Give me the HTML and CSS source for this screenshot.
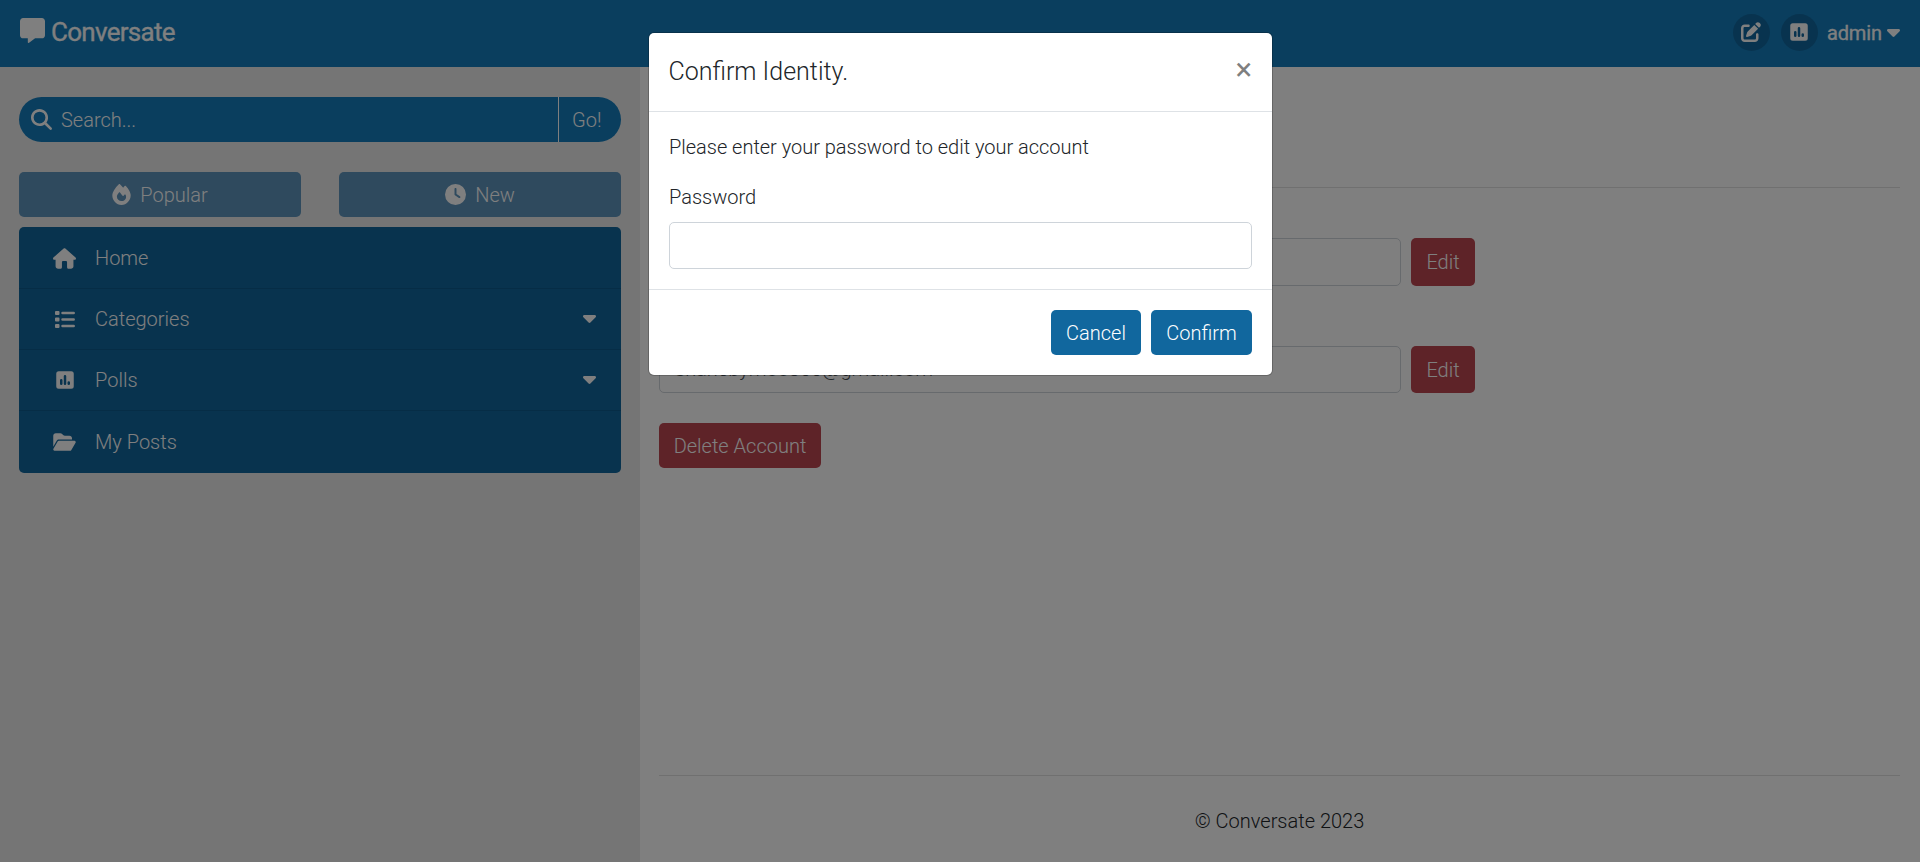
FILE: index.html
```html
<!DOCTYPE html>
<html lang="en">
<head>
<meta charset="utf-8">
<title>Conversate</title>
<link rel="stylesheet" href="styles.css">
</head>
<body>
<svg class="defs" width="0" height="0">
  <symbol id="poll" viewBox="0 0 448 512"><path fill-rule="evenodd" d="M64 32H384a64 64 0 0 1 64 64V416a64 64 0 0 1-64 64H64a64 64 0 0 1-64-64V96a64 64 0 0 1 64-64zM128 228a32 32 0 0 0-32 32v92a32 32 0 0 0 64 0v-92a32 32 0 0 0-32-32zM224 128a32 32 0 0 0-32 32V352a32 32 0 0 0 64 0V160a32 32 0 0 0-32-32zM320 288a32 32 0 0 0-32 32v32a32 32 0 0 0 64 0v-32a32 32 0 0 0-32-32z"/></symbol>
  <symbol id="caret" viewBox="0 0 320 192"><path d="M137.400 182.600c12.500 12.500 32.800 12.500 45.300 0l128-128C330 35 316 0 288 0H32C4 0-10 35 9.400 54.600z"/></symbol>
</svg>
<header class="navbar">
  <a class="brand">
    <svg class="brand-icon" viewBox="0 0 512 512"><path d="M64 0C28.700 0 0 28.700 0 64V352c0 35.300 28.700 64 64 64h96v80c0 6.100 3.400 11.600 8.800 14.300s11.900 2.100 16.800-1.500L309.300 416H448c35.300 0 64-28.700 64-64V64c0-35.300-28.700-64-64-64H64z"/></svg>
    <span>Conversate</span>
  </a>
  <nav class="nav-actions">
    <a class="round"><svg class="edit-icon" viewBox="0 0 512 512"><path d="M471.600 21.700c-21.900-21.900-57.300-21.900-79.200 0L362.300 51.700l97.900 97.900 30.100-30.100c21.900-21.900 21.900-57.300 0-79.200L471.600 21.700zm-299.200 220c-6.100 6.100-10.800 13.600-13.500 21.900l-29.600 88.800c-2.900 8.600-.6 18.100 5.800 24.600s15.900 8.700 24.600 5.800l88.800-29.600c8.200-2.700 15.700-7.400 21.900-13.500L437.700 172.300 339.700 74.300 172.400 241.700zM96 64C43 64 0 107 0 160V416c0 53 43 96 96 96H352c53 0 96-43 96-96V320c0-17.700-14.300-32-32-32s-32 14.300-32 32v96c0 17.700-14.300 32-32 32H96c-17.700 0-32-14.300-32-32V160c0-17.700 14.300-32 32-32h96c17.700 0 32-14.300 32-32s-14.300-32-32-32H96z"/></svg></a>
    <a class="round"><svg class="poll-icon"><use href="#poll"/></svg></a>
    <a class="user"><span>admin</span><svg class="caret"><use href="#caret"/></svg></a>
  </nav>
</header>
<div class="page">
  <aside class="sidebar">
    <form class="search">
      <svg class="search-icon" viewBox="0 0 512 512"><path d="M416 208c0 45.900-14.900 88.300-40 122.700L502.600 457.400c12.500 12.500 12.500 32.800 0 45.300s-32.800 12.500-45.300 0L330.700 376c-34.400 25.200-76.800 40-122.700 40C93.100 416 0 322.900 0 208S93.100 0 208 0S416 93.100 416 208zM208 352a144 144 0 1 0 0-288 144 144 0 1 0 0 288z"/></svg>
      <span class="search-text">Search...</span>
      <span class="go">Go!</span>
    </form>
    <div class="tabs">
      <a class="tab"><svg class="flame-icon" viewBox="0 0 448 512"><path d="M159.300 5.400c7.800-7.300 19.900-7.200 27.700 .1c27.600 25.900 53.500 53.800 77.700 84c11-14.400 23.500-30.100 37-42.900c7.900-7.400 20.100-7.400 28 .1c34.600 33 63.900 76.600 84.500 118c20.300 40.800 33.800 82.500 33.800 111.900C448 404.200 348.200 512 224 512C98.400 512 0 404.100 0 276.500c0-38.400 17.800-85.300 45.400-131.700C73.300 97.700 112.700 48.600 159.300 5.400zM225.700 416c25.300 0 47.700-7 68.800-21c42.100-29.400 53.400-88.200 28.100-134.400c-4.500-9-16-9.600-22.500-2l-25.200 29.300c-6.600 7.600-18.500 7.400-24.700-.5c-16.500-21-46-58.500-62.800-79.800c-6.300-8-18.300-8.100-24.700-.1c-33.800 42.500-50.800 69.300-50.800 99.400C112 375.400 162.600 416 225.700 416z"/></svg>Popular</a>
      <a class="tab"><svg class="clock-icon" viewBox="0 0 512 512"><path d="M256 0a256 256 0 1 1 0 512A256 256 0 1 1 256 0zM232 120V256c0 8 4 15.500 10.700 20l96 64c11 7.400 25.900 4.400 33.300-6.700s4.400-25.900-6.700-33.300L280 243.200V120c0-13.300-10.700-24-24-24s-24 10.700-24 24z"/></svg>New</a>
    </div>
    <ul class="menu">
      <li class="menu-item"><span class="menu-icon"><svg width="23" height="21" viewBox="0 0 576 512"><path d="M575.800 255.500c0 18-15 32.100-32 32.100h-32l.7 160.200c.2 35.500-28.500 64.300-64 64.300H392c-22.100 0-40-17.900-40-40V352c0-17.700-14.300-32-32-32H256c-17.700 0-32 14.300-32 32v120c0 22.100-17.900 40-40 40H128.500c-35.300 0-64-28.700-64-64V287.600H32c-18 0-32-14-32-32.100c0-9 3-17 10-24L266.400 8c7-7 15-8 22-8s15 2 21 7L564.800 231.500c8 7 12 15 11 24z"/></svg></span>Home</li>
      <li class="menu-item"><span class="menu-icon"><svg width="20" height="17" viewBox="0 0 20 17"><path d="M1 0h2.500a1 1 0 0 1 1 1v2a1 1 0 0 1-1 1H1a1 1 0 0 1-1-1V1a1 1 0 0 1 1-1zM1 6.500h2.500a1 1 0 0 1 1 1v2a1 1 0 0 1-1 1H1a1 1 0 0 1-1-1v-2a1 1 0 0 1 1-1zM1 13h2.500a1 1 0 0 1 1 1v2a1 1 0 0 1-1 1H1a1 1 0 0 1-1-1v-2a1 1 0 0 1 1-1zM7.500 .8h11.200a1.200 1.200 0 0 1 0 2.500H7.500a1.200 1.200 0 0 1 0-2.500zM7.500 7.300h11.200a1.200 1.200 0 0 1 0 2.500H7.500a1.200 1.200 0 0 1 0-2.500zM7.500 13.800h11.200a1.200 1.200 0 0 1 0 2.500H7.500a1.200 1.200 0 0 1 0-2.500z"/></svg></span>Categories<svg class="caret push"><use href="#caret"/></svg></li>
      <li class="menu-item"><span class="menu-icon"><svg class="poll-icon"><use href="#poll"/></svg></span>Polls<svg class="caret push"><use href="#caret"/></svg></li>
      <li class="menu-item"><span class="menu-icon"><svg width="23" height="20" viewBox="0 0 576 512"><path d="M88.700 223.800L0 375.800V96C0 60.700 28.700 32 64 32H181.500c17 0 33.300 6.700 45.300 18.700l26.500 26.500c12 12 28.300 18.700 45.300 18.700H416c35.300 0 64 28.700 64 64v32H144c-22.800 0-43.800 12.100-55.300 31.800zm27.600 16.100C122.100 230 132.600 224 144 224H544c11.500 0 22 6.100 27.700 16.100s5.700 22.200-.1 32.100l-112 192C453.900 474 443.400 480 432 480H32c-11.500 0-22-6.100-27.700-16.100s-5.700-22.200 .1-32.100l112-192z"/></svg></span>My Posts</li>
    </ul>
  </aside>
  <main class="content">
    <div class="heading"></div>
    <div class="field">
      <div class="row first"><span class="box"></span><a class="btn danger">Edit</a></div>
    </div>
    <div class="field">
      <div class="row"><span class="box">shanebymoo300@gmail.com</span><a class="btn danger">Edit</a></div>
    </div>
    <a class="btn danger delete">Delete Account</a>
    <footer class="footer">© Conversate 2023</footer>
  </main>
</div>
<div class="backdrop">
  <section class="modal">
    <div class="modal-header"><h2 class="modal-title">Confirm Identity.</h2><span class="close">×</span></div>
    <div class="modal-body">
      <p class="prompt">Please enter your password to edit your account</p>
      <label class="pw-label">Password</label>
      <input class="pw" type="password">
    </div>
    <div class="modal-footer"><a class="btn primary">Cancel</a><a class="btn primary">Confirm</a></div>
  </section>
</div>
</body>
</html>
```
FILE: styles.css
```css
* { box-sizing: border-box; }
body {
  margin: 0;
  height: 862px;
  overflow: hidden;
  display: flex;
  flex-direction: column;
  background: #fff;
  color: #212529;
  font: 300 20px/30px Roboto, sans-serif;
}
svg { fill: currentColor; flex: none; }
.defs { position: absolute; }
.navbar {
  height: 67px;
  flex: none;
  display: flex;
  justify-content: space-between;
  padding: 0 20px 3px 20px;
  background: #147dbd;
  color: #fff;
}
.brand { display: flex; align-items: center; gap: 6px; font-size: 26px; font-weight: 400; letter-spacing: -.72px; -webkit-text-stroke: .3px currentColor; }
.brand-icon { width: 25px; height: 25px; margin-top: -3px; }
.nav-actions { display: flex; align-items: center; }
.round {
  width: 37px;
  height: 37px;
  margin-right: 11px;
  border-radius: 50%;
  background: #11679e;
  display: flex;
  align-items: center;
  justify-content: center;
}
.edit-icon { width: 20px; height: 20px; }
.poll-icon { width: 18px; height: 20px; }
.user { display: flex; align-items: center; gap: 5px; font-weight: 400; letter-spacing: -.1px; -webkit-text-stroke: .3px currentColor; }
.round + .user { margin-left: -2px; padding-top: 1px; }
.caret { width: 13px; height: 8px; }
.page { flex: 1; display: flex; }
.sidebar { width: 640px; padding: 30px 19px; background: #ebebeb; color: #fff; }
.search {
  height: 45px;
  display: flex;
  align-items: center;
  border-radius: 23px;
  background: #147dbd;
  overflow: hidden;
}
.search-icon { width: 21px; height: 21px; margin: 0 9px 0 12px; }
.search-text { flex: 1; }
.go { width: 63px; height: 45px; line-height: 46px; padding-left: 13px; border-left: 1px solid #fff; }
.tabs { display: grid; grid-template-columns: 1fr 1fr; gap: 38px; margin: 30px 0 10px; }
.tab {
  height: 45px;
  display: flex;
  align-items: center;
  justify-content: center;
  gap: 9px;
  border-radius: 5px;
  background: #5e94bc;
}
.flame-icon { width: 19px; height: 21px; }
.clock-icon { width: 21px; height: 21px; }
.menu { list-style: none; margin: 0; padding: 0; border-radius: 5px; background: #10669c; }
.menu-item {
  height: 61px;
  display: flex;
  align-items: center;
  padding: 0 25px 0 34px;
  border-bottom: 1px solid #0d5a8c;
}
.menu-item:first-child { height: 62px; padding-top: 1px; }
.menu-item:last-child { height: 62px; border-bottom: 0; }
.menu-icon { width: 23px; margin-right: 19px; display: flex; justify-content: center; }
.push { margin-left: auto; }
.content { flex: 1; padding: 0 20px 0 19px; display: flex; flex-direction: column; }
.heading { height: 121px; margin-bottom: 20px; border-bottom: 1px solid #e0e0e0; }
.field { padding-top: 30px; margin-bottom: 30px; }
.row { display: flex; gap: 10px; height: 47px; }
.row.first { height: 48px; }
.box { width: 742px; padding: 7px 15px; border: 1px solid #ced4da; border-radius: 5px; color: #495057; }
.btn { display: flex; align-items: center; justify-content: center; height: 45px; border-radius: 5px; color: #fff; }
.row .btn { width: 64px; height: auto; }
.danger { background: #bd4650; }
.delete { width: 162px; }
.footer { margin-top: auto; height: 87px; padding-top: 30px; border-top: 1px solid #e0e0e0; text-align: center; }
.backdrop {
  position: absolute;
  inset: 0;
  padding-top: 33px;
  background: rgba(0, 0, 0, .5);
}
.modal { width: 623px; height: 342px; margin: 0 0 0 649px; border-radius: 5px; background: #fff; box-shadow: 0 0 0 1px rgba(0, 0, 0, .2); }
.modal-header { height: 79px; display: flex; justify-content: space-between; padding: 20px 20px 20px 19.500px; border-bottom: 1px solid #dee2e6; }
.modal-title { margin: 0; font-size: 25px; font-weight: 300; line-height: 38px; }
.close { font-size: 31px; font-weight: 400; line-height: 34px; color: #7f7f7f; }
.modal-body { padding: 20px; height: 178px; border-bottom: 1px solid #dee2e6; }
.prompt { margin: 0 0 20px; letter-spacing: -.02px; }
.pw-label { display: block; margin-bottom: 10px; }
.pw { display: block; width: 583px; height: 47px; border: 1px solid #ced4da; border-radius: 5px; }
.modal-footer { display: flex; justify-content: flex-end; gap: 10px; padding: 20px; }
.primary { width: 90px; background: #11679e; }
.primary + .primary { width: 101px; }
```
